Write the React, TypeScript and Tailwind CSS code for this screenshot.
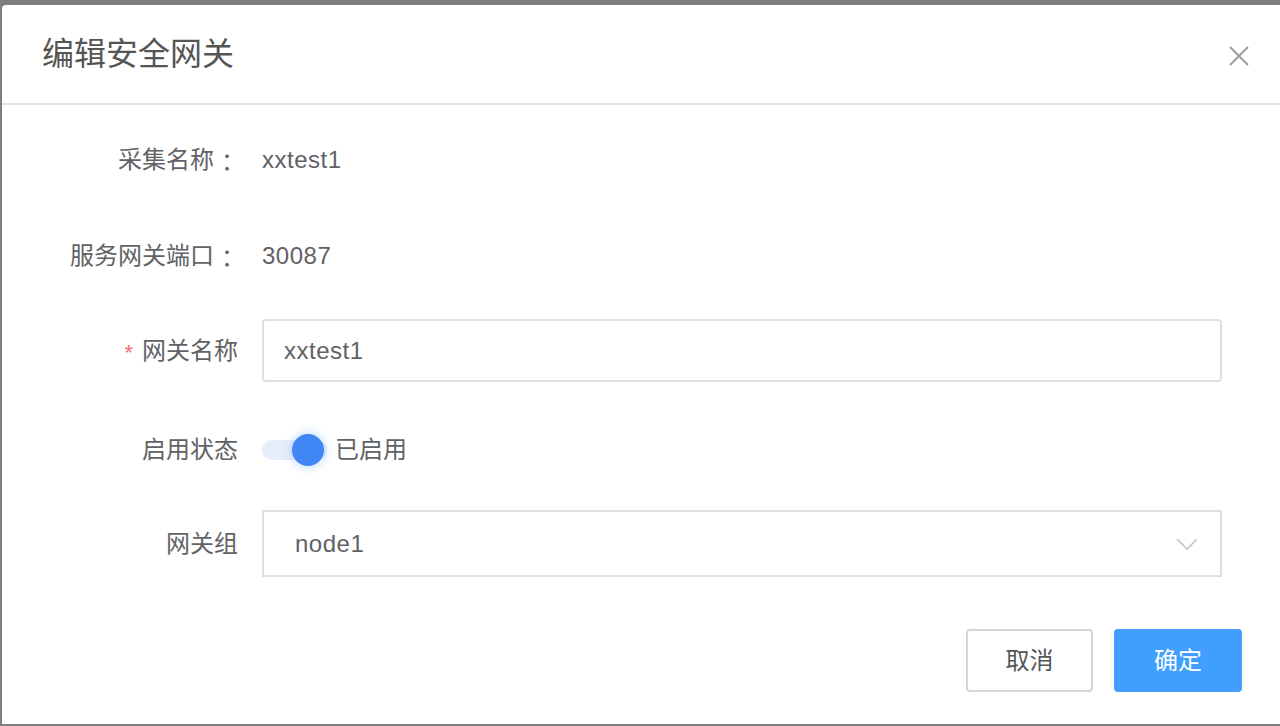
import React from "react";

const font = { fontFamily: '"Liberation Sans", "Noto Sans CJK SC", sans-serif' };

function Label({ children, required, colon }: { children: React.ReactNode; required?: boolean; colon?: boolean }) {
  return (
    <div className="flex w-[236px] shrink-0 items-center justify-end text-[24px] leading-none text-[#606266]">
      {required && <span className="mr-[9px] mt-[4px] text-[22px] text-[#f56c6c]">*</span>}
      <span>{children}</span>
      {colon && (
        <span
          className="inline-block w-[24px] pl-[7px] text-left [text-spacing-trim:space-all]"
          style={{ fontFamily: '"Noto Sans CJK SC", sans-serif' }}
        >
          ：
        </span>
      )}
    </div>
  );
}

export default function App() {
  return (
    <div className="h-[726px] w-[1280px] overflow-hidden bg-[#7f7f7f] pl-[2px] pt-[5px]" style={font}>
      <div className="flex h-[719px] w-[1278px] flex-col rounded-tl-[4px] bg-white">
        {/* Header */}
        <div className="flex h-[100px] shrink-0 items-center justify-between border-b-2 border-[#e4e4e4] pl-[40px] pr-[31px]">
          <div className="text-[32px] leading-none text-[#555]">编辑安全网关</div>
          <svg width="20" height="20" viewBox="0 0 20 20" className="mt-[3px]">
            <path d="M1 1 L19 19 M19 1 L1 19" stroke="#9a9a9a" strokeWidth="1.8" fill="none" />
          </svg>
        </div>

        {/* Body */}
        <div className="flex flex-col">
          <div className="mt-[24px] flex h-[62px] items-center">
            <Label colon>采集名称</Label>
            <div className="ml-[24px] text-[24px] leading-none tracking-[0.5px] text-[#606266]">xxtest1</div>
          </div>
          <div className="mt-[34px] flex h-[62px] items-center">
            <Label colon>服务网关端口</Label>
            <div className="ml-[24px] text-[24px] leading-none tracking-[0.5px] text-[#606266]">30087</div>
          </div>
          <div className="mt-[32px] flex h-[63px] items-center">
            <Label required>网关名称</Label>
            <div className="ml-[24px] flex h-[63px] w-[960px] items-center rounded-[4px] border-2 border-[#dcdfe6] pl-[20px] text-[24px] leading-none tracking-[0.5px] text-[#606266]">
              xxtest1
            </div>
          </div>
          <div className="mt-[37px] flex h-[62px] items-center">
            <Label>启用状态</Label>
            <div className="ml-[24px] flex items-center">
              <div className="relative h-[20px] w-[65px] rounded-full bg-[#e7eefb]">
                <div className="absolute left-[30px] top-[-6px] h-[32px] w-[32px] rounded-full bg-[#4186f5] shadow-[0_0_8px_2px_rgba(65,134,245,0.25)]" />
              </div>
              <div className="ml-[8px] text-[24px] leading-none text-[#606266]">已启用</div>
            </div>
          </div>
          <div className="mt-[29px] flex h-[67px] items-center">
            <Label>网关组</Label>
            <div className="ml-[24px] flex h-[67px] w-[960px] items-center justify-between border-2 border-[#dcdfe6] pl-[31px] pr-[22px] text-[24px] leading-none tracking-[0.5px] text-[#606266]">
              <span>node1</span>
              <svg width="22" height="14" viewBox="0 0 22 14">
                <path d="M1 2 L11 12 L21 2" stroke="#c0c4cc" strokeWidth="1.6" fill="none" />
              </svg>
            </div>
          </div>
        </div>

        {/* Footer */}
        <div className="mt-[52px] flex justify-end gap-[21px] pr-[38px]">
          <button className="flex h-[63px] w-[127px] items-center justify-center rounded-[4px] border-2 border-[#d6d6d6] bg-white text-[24px] leading-none text-[#555]">
            取消
          </button>
          <button className="flex h-[63px] w-[128px] items-center justify-center rounded-[4px] bg-[#409eff] text-[24px] leading-none text-white">
            确定
          </button>
        </div>
      </div>
    </div>
  );
}
